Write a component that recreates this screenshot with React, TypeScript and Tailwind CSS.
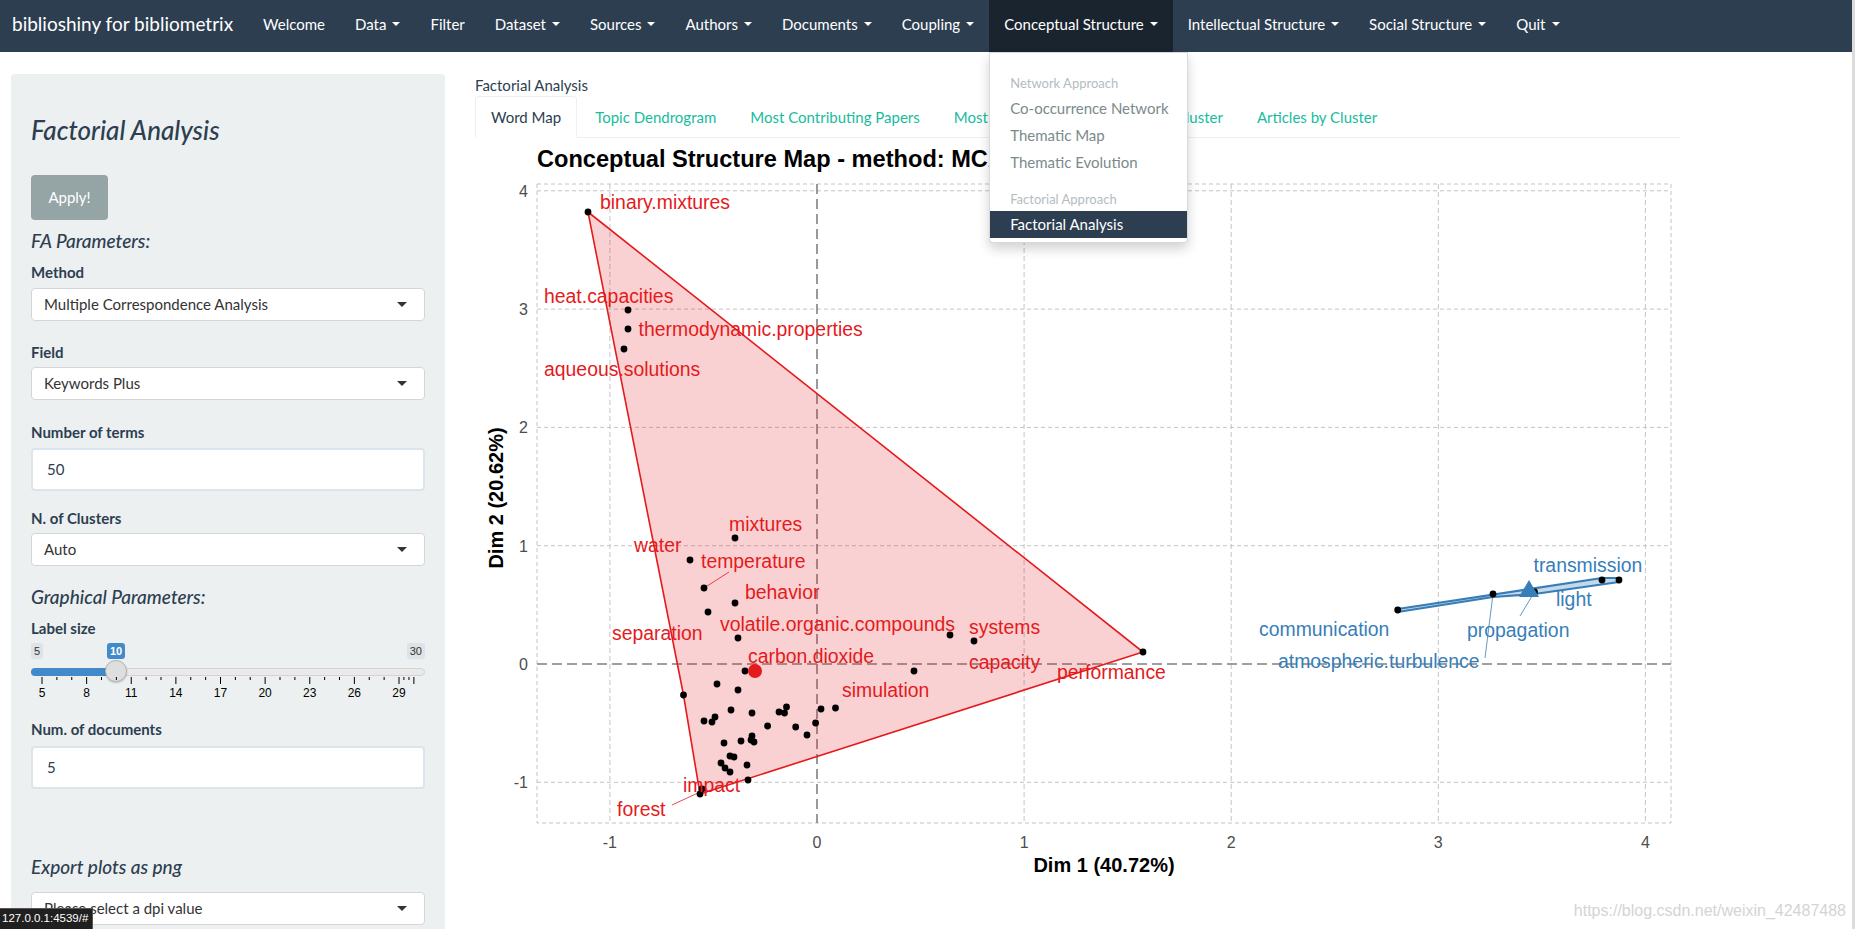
import React from "react";

const navItems: { label: string; caret?: boolean; active?: boolean }[] = [
  { label: "Welcome" },
  { label: "Data", caret: true },
  { label: "Filter" },
  { label: "Dataset", caret: true },
  { label: "Sources", caret: true },
  { label: "Authors", caret: true },
  { label: "Documents", caret: true },
  { label: "Coupling", caret: true },
  { label: "Conceptual Structure", caret: true, active: true },
  { label: "Intellectual Structure", caret: true },
  { label: "Social Structure", caret: true },
  { label: "Quit", caret: true },
];

const tabs = ["Word Map", "Topic Dendrogram", "Most Contributing Papers", "Most Cited Papers", "Words by Cluster", "Articles by Cluster"];

const X = (v: number) => 817 + 207.1 * v;
const Y = (v: number) => 664 - 118.3 * v;

const redPoints: [number, number][] = [
  [588, 212], [628, 310], [628, 329], [624, 349], [735, 538], [690, 560], [704, 588], [735, 603],
  [708, 612], [738, 638], [950, 635], [974, 641], [745, 671], [914, 671], [1143, 652], [717, 684],
  [738, 690], [683.5, 695], [835.5, 708], [821, 709], [815.6, 723], [786.5, 707], [779, 712],
  [784.5, 713], [752, 713], [731, 710], [715, 717], [704, 721], [712, 722], [767.6, 726], [795.7, 727],
  [807, 735], [741, 741], [752, 736], [754, 742], [751, 740], [724, 743], [730, 756], [734, 757],
  [747, 765], [721, 763], [725, 768], [730, 772], [748, 780], [702, 789], [700, 794],
];

const redLabels: [string, number, number][] = [
  ["binary.mixtures", 600, 202],
  ["heat.capacities", 544, 296],
  ["thermodynamic.properties", 638.6, 329],
  ["aqueous.solutions", 544, 369],
  ["mixtures", 729, 524],
  ["water", 634, 545],
  ["temperature", 701, 561],
  ["behavior", 745, 592],
  ["volatile.organic.compounds", 720, 624],
  ["separation", 612, 633],
  ["systems", 969, 627],
  ["carbon.dioxide", 748, 656],
  ["capacity", 969, 662],
  ["performance", 1057, 672],
  ["simulation", 842, 690],
  ["impact", 683, 785],
  ["forest", 617, 809],
];

const bluePoints: [number, number][] = [[1397.7, 610], [1493, 594], [1534.5, 592], [1602, 580], [1619, 580]];

const blueLabels: [string, number, number][] = [
  ["transmission", 1533.5, 565],
  ["light", 1556, 599],
  ["communication", 1259, 629],
  ["propagation", 1467, 630],
  ["atmospheric.turbulence", 1278, 661],
];

function Caret({ color = "border-t-white" }: { color?: string }) {
  return <span className={`inline-block w-0 h-0 ml-[6px] border-t-[4px] border-x-[4px] border-x-transparent ${color}`} />;
}

function Navbar() {
  return (
    <nav className="h-[52px] bg-[#2c3e50] flex items-stretch text-white text-[15px] relative z-20">
      <div className="pl-[12px] pr-[15px] flex items-center pb-[4px] text-[19px]">biblioshiny for bibliometrix</div>
      {navItems.map((it) => (
        <div key={it.label} className={`relative flex items-center px-[15px] pb-[4px] ${it.active ? "bg-[#1a242f]" : ""}`}>
          <span>{it.label}</span>
          {it.caret && <Caret />}
          {it.active && <DropdownMenu />}
        </div>
      ))}
    </nav>
  );
}

function DropdownMenu() {
  return (
    <div className="absolute left-0 top-[52px] w-[199px] bg-white border border-black/15 rounded-b-[4px] shadow-[0_6px_12px_rgba(0,0,0,0.175)] pt-[19px] pb-[4px]">
      <div className="h-[23px] leading-[23px] pl-[20px] text-[13px] text-[#b4bcc2]">Network Approach</div>
      <div className="h-[27px] leading-[27px] pl-[20px] text-[15px] text-[#7b8a8b]">Co-occurrence Network</div>
      <div className="h-[27px] leading-[27px] pl-[20px] text-[15px] text-[#7b8a8b]">Thematic Map</div>
      <div className="h-[27px] leading-[27px] pl-[20px] text-[15px] text-[#7b8a8b]">Thematic Evolution</div>
      <div className="h-[12px]" />
      <div className="h-[23px] leading-[23px] pl-[20px] text-[13px] text-[#b4bcc2]">Factorial Approach</div>
      <div className="h-[27px] leading-[27px] pl-[20px] text-[15px] text-white bg-[#2c3e50]">Factorial Analysis</div>
    </div>
  );
}

function Label({ children, className = "" }: { children: React.ReactNode; className?: string }) {
  return <div className={`h-[20px] leading-[20px] text-[15px] font-bold ${className}`}>{children}</div>;
}

function Select({ value, className = "" }: { value: string; className?: string }) {
  return (
    <div className={`h-[33px] bg-white border border-[#d5d5d5] rounded-[4px] flex items-center justify-between pl-[12px] pr-[17px] text-[15px] text-[#333] ${className}`}>
      <span>{value}</span>
      <span className="w-0 h-0 border-t-[5px] border-x-[5px] border-x-transparent border-t-[#333]" />
    </div>
  );
}

function TextInput({ value, className = "" }: { value: string; className?: string }) {
  return (
    <div className={`h-[43px] bg-white border-2 border-[#dce4ec] rounded-[4px] flex items-center pl-[14px] text-[15px] text-[#2c3e50] ${className}`}>
      {value}
    </div>
  );
}

function Slider() {
  const tx = (v: number) => 11 + (v - 5) * 14.875;
  const minors: number[] = [];
  for (let v = 5; v <= 29; v++) if ((v - 5) % 3 !== 0) minors.push(v);
  minors.push(29.33, 29.67);
  const majors = [5, 8, 11, 14, 17, 20, 23, 26, 29];
  return (
    <div className="relative h-[57px] mt-[5px]">
      <span className="absolute left-0 top-0 h-[16px] leading-[16px] px-[3px] rounded-[3px] bg-[#dfe2e6] text-[#333] text-[11px] font-['Liberation_Sans',sans-serif]">5</span>
      <span className="absolute right-0 top-0 h-[16px] leading-[16px] px-[3px] rounded-[3px] bg-[#dfe2e6] text-[#333] text-[11px] font-['Liberation_Sans',sans-serif]">30</span>
      <span className="absolute left-[76px] top-0 h-[16px] leading-[16px] px-[3px] rounded-[3px] bg-[#428bca] text-white text-[11px] font-bold font-['Liberation_Sans',sans-serif]">10</span>
      <div className="absolute left-0 right-0 top-[25px] h-[8px] rounded-full bg-[#eaeaea] border border-[#d3d3d3]" />
      <div className="absolute left-0 w-[86px] top-[25px] h-[8px] rounded-l-full bg-[#428bca]" />
      <div className="absolute left-[74px] top-[17px] w-[22px] h-[22px] rounded-full bg-[#dedede] border border-[#b5b5b5] shadow-[0_1px_2px_rgba(0,0,0,0.2)]" />
      <svg className="absolute left-0 top-[34px]" width={393} height={23}>
        {majors.map((v) => (
          <g key={v}>
            <line x1={tx(v)} x2={tx(v)} y1={0} y2={7} stroke="#000" strokeWidth={1} />
            <text x={tx(v)} y={20} fontSize={12} textAnchor="middle" fontFamily="'Liberation Sans', Arial, sans-serif" fill="#000">
              {v}
            </text>
          </g>
        ))}
        <line x1={tx(30)} x2={tx(30)} y1={0} y2={7} stroke="#000" strokeWidth={1} />
        {minors.map((v) => (
          <line key={v} x1={tx(v)} x2={tx(v)} y1={0} y2={3} stroke="#000" strokeWidth={1} />
        ))}
      </svg>
    </div>
  );
}

function Sidebar() {
  return (
    <aside className="ml-[11px] mt-[22px] w-[434px] h-[900px] shrink-0 bg-[#ecf0f1] rounded-[4px] px-[20px] pt-[20px] text-[#2c3e50]">
      <h3 className="mt-[20px] text-[26px] leading-[32px] italic font-medium">Factorial Analysis</h3>
      <button className="block mt-[29px] w-[77px] h-[45px] rounded-[4px] bg-[#95a5a6] text-white text-[15px]">Apply!</button>
      <h4 className="mt-[9px] text-[19px] leading-[24px] italic font-medium">FA Parameters:</h4>
      <Label className="mt-[9px]">Method</Label>
      <Select className="mt-[6px]" value="Multiple Correspondence Analysis" />
      <Label className="mt-[21px]">Field</Label>
      <Select className="mt-[5px]" value="Keywords Plus" />
      <Label className="mt-[22px]">Number of terms</Label>
      <TextInput className="mt-[6px]" value="50" />
      <Label className="mt-[17px]">N. of Clusters</Label>
      <Select className="mt-[5px]" value="Auto" />
      <h4 className="mt-[19px] text-[19px] leading-[24px] italic font-medium">Graphical Parameters:</h4>
      <Label className="mt-[9px]">Label size</Label>
      <Slider />
      <Label className="mt-[19px]">Num. of documents</Label>
      <TextInput className="mt-[7px] h-[41px]" value="5" />
      <h4 className="mt-[66px] text-[19px] leading-[24px] italic font-medium">Export plots as png</h4>
      <Select className="mt-[13px]" value="Please select a dpi value" />
    </aside>
  );
}

function Plot() {
  const gridX = [-1, 1, 2, 3, 4];
  const gridY = [4, 3, 2, 1, -1];
  const L = 537, R = 1671, T = 184, B = 823;
  const lbl = (t: string, x: number, y: number, fill: string) => (
    <text key={t} x={x} y={y + 6.5} fontSize={19.4} fill={fill}>
      {t}
    </text>
  );
  return (
    <svg width={1205} height={792} className="block">
      <g transform="translate(-475,-138)" fontFamily="'Liberation Sans', Arial, sans-serif">
        <text x={537} y={167} fontSize={23.6} fontWeight="bold" fill="#000">
          Conceptual Structure Map - method: MCA
        </text>
        <rect x={L} y={T} width={R - L} height={B - T} fill="none" stroke="#c4c4c4" strokeDasharray="4 3" />
        {gridX.map((v) => (
          <line key={"gx" + v} x1={X(v)} x2={X(v)} y1={T} y2={B} stroke="#c4c4c4" strokeDasharray="5 3" />
        ))}
        {gridY.map((v) => (
          <line key={"gy" + v} x1={L} x2={R} y1={Y(v)} y2={Y(v)} stroke="#c4c4c4" strokeDasharray="4 3" />
        ))}
        <line x1={X(0)} x2={X(0)} y1={T} y2={B} stroke="#808080" strokeWidth={1.6} strokeDasharray="10 5" />
        <line x1={L} x2={R} y1={Y(0)} y2={Y(0)} stroke="#808080" strokeWidth={1.6} strokeDasharray="10 5" />

        <polygon points="588,212 1143,652 700,794 683.5,695" fill="#e41a1c" fillOpacity={0.2} stroke="#e41a1c" strokeWidth={1.6} />
        <polygon points="1397.7,609 1602,578 1619,578 1619,582 1534.5,594 1493,597 1397.7,612" fill="#377eb8" fillOpacity={0.3} stroke="#377eb8" strokeWidth={2.2} strokeLinejoin="round" />

        <line x1={704} y1={588} x2={729} y2={572} stroke="#e41a1c" strokeWidth={0.8} />
        <line x1={700} y1={792} x2={672} y2={805} stroke="#e41a1c" strokeWidth={0.8} />
        <line x1={1534.5} y1={592} x2={1520} y2={616} stroke="#377eb8" strokeWidth={0.8} />
        <line x1={1493} y1={594} x2={1485} y2={658} stroke="#377eb8" strokeWidth={0.8} />

        {redPoints.map(([x, y], i) => (
          <circle key={"r" + i} cx={x} cy={y} r={3.4} fill="#000" />
        ))}
        {bluePoints.map(([x, y], i) => (
          <circle key={"b" + i} cx={x} cy={y} r={3.4} fill="#000" />
        ))}
        <circle cx={755} cy={671} r={7} fill="#e41a1c" />
        <polygon points="1529,580 1519,597 1539,597" fill="#377eb8" />

        {redLabels.map(([t, x, y]) => lbl(t, x, y, "#e41a1c"))}
        {blueLabels.map(([t, x, y]) => lbl(t, x, y, "#377eb8"))}

        {gridY.concat([0]).map((v) => (
          <text key={"ty" + v} x={528} y={Y(v) + 6} fontSize={16} fill="#4d4d4d" textAnchor="end">
            {v}
          </text>
        ))}
        {[-1, 0, 1, 2, 3, 4].map((v) => (
          <text key={"tx" + v} x={X(v)} y={848} fontSize={16} fill="#4d4d4d" textAnchor="middle">
            {v}
          </text>
        ))}
        <text x={1104} y={872} fontSize={20} fontWeight="bold" textAnchor="middle" fill="#000">
          Dim 1 (40.72%)
        </text>
        <text transform="translate(496,498) rotate(-90)" y={7} fontSize={20} fontWeight="bold" textAnchor="middle" fill="#000">
          Dim 2 (20.62%)
        </text>
      </g>
    </svg>
  );
}

function MainPanel() {
  return (
    <main className="ml-[30px] w-[1205px] shrink-0">
      <div className="mt-[22px] h-[22px] leading-[22px] text-[15px] text-[#2c3e50]">Factorial Analysis</div>
      <ul className="flex h-[42px] border-b border-[#ecf0f1]">
        {tabs.map((t, i) => (
          <li
            key={t}
            className={`h-[42px] -mb-px mr-[2px] px-[15px] flex items-center text-[15px] rounded-t-[4px] border ${
              i === 0 ? "bg-white border-[#ecf0f1] border-b-white text-[#2c3e50]" : "border-transparent text-[#18bc9c]"
            }`}
          >
            {t}
          </li>
        ))}
      </ul>
      <Plot />
    </main>
  );
}

export default function App() {
  return (
    <div className="relative w-[1855px] h-[929px] overflow-hidden bg-white flex font-['Lato',sans-serif]">
      <div className="w-[1852px] shrink-0">
        <Navbar />
        <div className="flex">
          <Sidebar />
          <MainPanel />
        </div>
      </div>
      <div className="w-[3px] bg-[#dcdcdc]" />
      <div className="absolute left-0 top-[908px] h-[21px] w-[93px] bg-[#202020] border-t border-r border-[#555] flex items-center pl-[2px] text-white text-[11.5px] font-['Liberation_Sans',sans-serif]">
        127.0.0.1:4539/#
      </div>
      <div className="absolute right-[9px] top-[900px] text-[16px] leading-[22px] text-[#d4d4d4] font-['Liberation_Sans',sans-serif]">
        https://blog.csdn.net/weixin_42487488
      </div>
    </div>
  );
}
